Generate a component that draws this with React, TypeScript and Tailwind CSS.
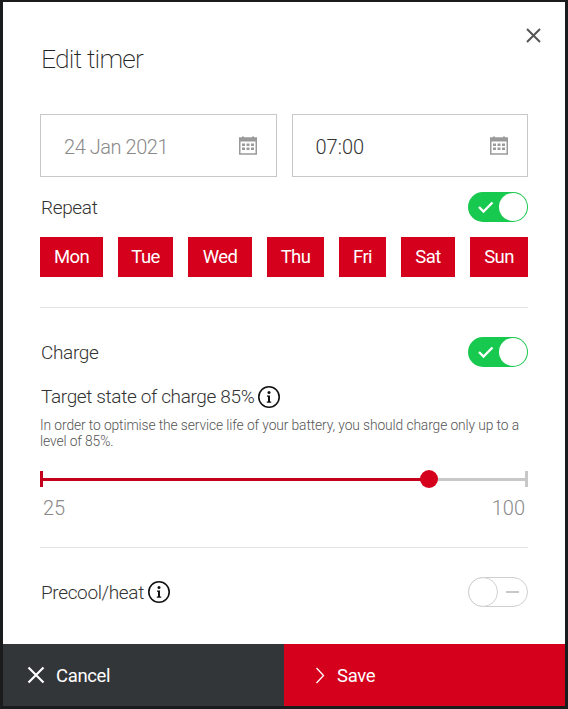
const font = { fontFamily: '"Roboto", "Liberation Sans", sans-serif' };

const days = [
    { label: "Mon", width: "w-[63px]" },
    { label: "Tue", width: "w-[55px]" },
    { label: "Wed", width: "w-[64px]" },
    { label: "Thu", width: "w-[57px]" },
    { label: "Fri", width: "w-[47px]" },
    { label: "Sat", width: "w-[54px]" },
    { label: "Sun", width: "w-[58px]" },
];

function CalendarIcon() {
    return (
        <svg width="18" height="19" viewBox="0 0 18 19" className="text-[#9a9a9a]">
            <path d="M3 0.5h2v2H3zM13 0.5h2v2h-2z" fill="currentColor" />
            <rect x="0.75" y="2" width="16.5" height="16" fill="none" stroke="currentColor" strokeWidth="1.5" />
            <rect x="0.75" y="2" width="16.5" height="3.5" fill="currentColor" />
            <path d="M3 7.5h3v2.5H3zM7.5 7.5h3v2.5h-3zM12 7.5h3v2.5h-3zM3 11.5h3V14H3zM7.5 11.5h3V14h-3zM12 11.5h3V14h-3z" fill="currentColor" />
        </svg>
    );
}

function InfoIcon() {
    return (
        <svg width="24" height="24" viewBox="0 0 24 24" className="text-[#111]">
            <circle cx="12" cy="12" r="10.2" fill="none" stroke="currentColor" strokeWidth="1.6" />
            <circle cx="12" cy="7.5" r="1.5" fill="currentColor" />
            <path d="M10 10.5h3v6h1.2v1.3H9.8v-1.3H11v-4.7h-1z" fill="currentColor" />
        </svg>
    );
}

function ToggleOn() {
    return (
        <div className="flex h-[30px] w-[60px] items-center justify-end rounded-full bg-[#18c94f] p-px">
            <div className="relative h-[28px] w-[28px] rounded-full bg-white">
                <svg width="18" height="14" viewBox="0 0 18 14" className="absolute left-[-22px] top-[7px]">
                    <path d="M2 7l4.5 4.5L15.5 2.5" fill="none" stroke="#fff" strokeWidth="2.4" />
                </svg>
            </div>
        </div>
    );
}

function ToggleOff() {
    return (
        <div className="flex h-[30px] w-[60px] items-center rounded-full border border-[#cfcfcf]">
            <div className="h-[30px] w-[30px] -ml-px rounded-full border border-[#cfcfcf] bg-white" />
            <div className="ml-[8px] h-[2px] w-[13px] bg-[#c8c8c8]" />
        </div>
    );
}

function DateField({ value, muted }: { value: string; muted?: boolean }) {
    return (
        <div className="flex h-[63px] flex-1 items-center justify-between border border-[#c8c8c8] pl-[23px] pr-[19px]">
            <span className={`pt-[3px] text-[20px] font-light ${muted ? "text-[#8a8a8a] tracking-[-0.45px]" : "text-[#333]"}`}>{value}</span>
            <CalendarIcon />
        </div>
    );
}

export default function App() {
    return (
        <div className="h-[709px] w-[568px] bg-[#1a1b1d] pl-[3px] pr-[3px] pt-[2px]" style={font}>
            <div className="relative flex h-[704px] w-[562px] flex-col bg-white">
                <button className="absolute right-[24px] top-[26px] text-[#555]">
                    <svg width="15" height="15" viewBox="0 0 15 15" className="block">
                        <path d="M1 1l13 13M14 1L1 14" fill="none" stroke="currentColor" strokeWidth="2" />
                    </svg>
                </button>

                <div className="flex-1 pl-[37px] pr-[37px]">
                    <h1 className="pl-px pt-[39px] text-[26.5px] leading-[36px] font-extralight tracking-[-0.8px] text-[#222]">Edit timer</h1>

                    <div className="mt-[37px] flex gap-[15px]">
                        <DateField value="24 Jan 2021" muted />
                        <DateField value="07:00" />
                    </div>

                    <div className="mt-[15px] flex h-[30px] items-center justify-between">
                        <span className="pl-px pt-[2px] text-[19px] font-light tracking-[-0.36px] text-[#333]">Repeat</span>
                        <ToggleOn />
                    </div>

                    <div className="mt-[15px] flex justify-between">
                        {days.map((d) => (
                            <div key={d.label} className={`flex h-[40px] items-center justify-center bg-[#d5001c] pt-px text-[18.5px] font-[450] tracking-[-0.6px] text-white ${d.width}`}>
                                {d.label}
                            </div>
                        ))}
                    </div>

                    <div className="mt-[30px] h-px bg-[#e3e3e3]" />

                    <div className="mt-[29px] flex h-[30px] items-center justify-between">
                        <span className="pl-px pt-[2px] text-[19px] font-light tracking-[-0.36px] text-[#333]">Charge</span>
                        <ToggleOn />
                    </div>

                    <div className="mt-[17px] flex h-[26px] items-center gap-[3px]">
                        <span className="pl-px pt-px text-[19px] font-light tracking-[-0.36px] text-[#333]">Target state of charge 85%</span>
                        <InfoIcon />
                    </div>

                    <p className="mt-[7px] text-[13.8px] leading-[16px] font-light tracking-[-0.1px] text-[#555]">
                        In order to optimise the service life of your battery, you should charge only up to a level of 85%.
                    </p>

                    <div className="relative mt-[22px] h-[16px]">
                        <div className="absolute left-0 top-[7px] h-[3px] w-full bg-[#c8c8c8]" />
                        <div className="absolute left-0 top-[7px] h-[3px] w-[389px] bg-[#c4001a]" />
                        <div className="absolute left-0 top-0 h-[16px] w-[3px] bg-[#c4001a]" />
                        <div className="absolute right-0 top-0 h-[16px] w-[3px] bg-[#c8c8c8]" />
                        <div className="absolute left-[380px] top-[-1px] h-[18px] w-[18px] rounded-full bg-[#d5001c]" />
                    </div>

                    <div className="mt-[9px] flex justify-between pl-[3px] pr-[3px] text-[20px] leading-[24px] font-light text-[#8a8a8a]">
                        <span>25</span>
                        <span>100</span>
                    </div>

                    <div className="mt-[27px] h-px bg-[#e3e3e3]" />

                    <div className="mt-[29px] flex h-[30px] items-center justify-between">
                        <div className="flex items-center gap-[3px]">
                            <span className="pl-px pt-[2px] text-[19px] font-light tracking-[-0.36px] text-[#333]">Precool/heat</span>
                            <InfoIcon />
                        </div>
                        <ToggleOff />
                    </div>
                </div>

                <div className="flex h-[62px]">
                    <button className="flex w-[281px] items-center gap-[11px] bg-[#323639] pl-[24px] text-[18.5px] font-[450] tracking-[-0.35px] text-white">
                        <svg width="18" height="18" viewBox="0 0 18 18">
                            <path d="M1.5 1.5l15 15M16.5 1.5l-15 15" fill="none" stroke="#fff" strokeWidth="2.2" />
                        </svg>
                        <span className="pt-[4px]">Cancel</span>
                    </button>
                    <button className="flex flex-1 items-center gap-[12px] bg-[#d5001c] pl-[31px] text-[18.5px] font-[450] tracking-[-0.35px] text-white">
                        <svg width="10" height="17" viewBox="0 0 10 17">
                            <path d="M1.5 1l7 7.5-7 7.5" fill="none" stroke="#fff" strokeWidth="1.3" />
                        </svg>
                        <span className="pt-[4px]">Save</span>
                    </button>
                </div>
            </div>
        </div>
    );
}
